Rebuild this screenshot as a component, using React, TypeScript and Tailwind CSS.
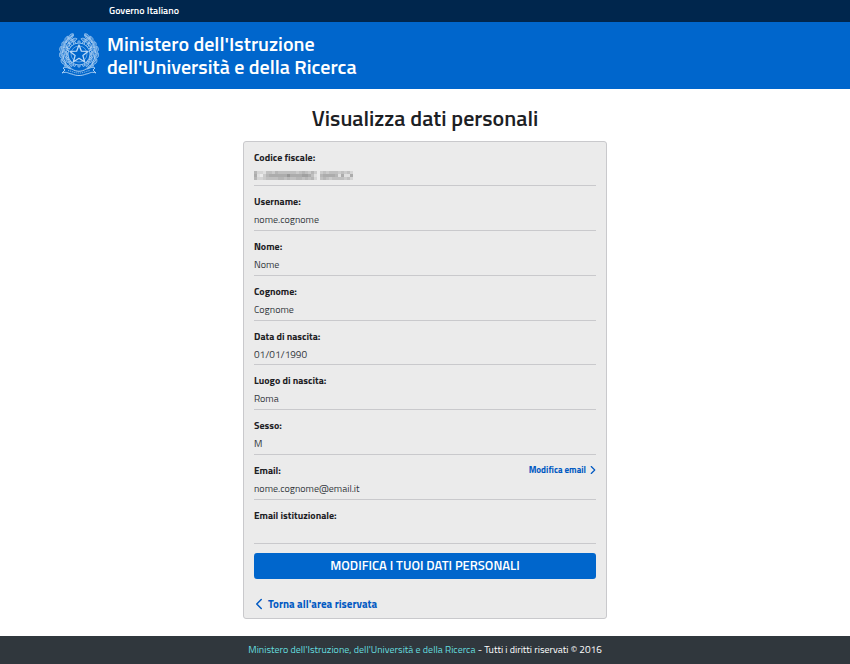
import { FiChevronLeft, FiChevronRight } from 'react-icons/fi'

interface Field {
    label: string
    value: string
    masked?: boolean
    action?: string
}

const fields: Field[] = [
    { label: 'Codice fiscale:', value: '', masked: true },
    { label: 'Username:', value: 'nome.cognome' },
    { label: 'Nome:', value: 'Nome' },
    { label: 'Cognome:', value: 'Cognome' },
    { label: 'Data di nascita:', value: '01/01/1990' },
    { label: 'Luogo di nascita:', value: 'Roma' },
    { label: 'Sesso:', value: 'M' },
    { label: 'Email:', value: 'nome.cognome@email.it', action: 'Modifica email' },
    { label: 'Email istituzionale:', value: '' },
]

// grey level of each 3px tile, 0 = background, 9 = darkest
const mosaic = [
    '522144354444443454353034344434342',
    '610356666668666677641056666516116',
    '522344445545445545452045434444342',
]

function MaskedValue() {
    return (
        <svg className="h-[9px] w-[99px]" viewBox="0 0 99 9" role="img" aria-label="Nascosto">
            {mosaic.map((row, y) =>
                row.split('').map((level, x) => (
                    <rect
                        key={`${x}-${y}`}
                        x={x * 3}
                        y={y * 3}
                        width="3"
                        height="3"
                        fill="#666"
                        fillOpacity={Number(level) * 0.08}
                    />
                )),
            )}
        </svg>
    )
}

const branch = [
    [12, 4, 35],
    [8, 7, 15],
    [5, 12, -5],
    [3, 17, -15],
    [3, 23, -30],
    [5, 29, -45],
    [9, 34, -60],
]

function Emblem() {
    const teeth = Array.from({ length: 16 }, (_, i) => i * 22.5)
    return (
        <svg className="h-11 w-10 shrink-0" viewBox="0 0 40 44" fill="none" stroke="#b9d8f6" aria-hidden="true">
            <circle cx="20" cy="21" r="11" strokeWidth="0.8" />
            <circle cx="20" cy="21" r="8" strokeWidth="0.5" />
            {teeth.map((angle) => (
                <path key={angle} d="M19 10 v-2 h2 v2" strokeWidth="0.7" transform={`rotate(${angle} 20 21)`} />
            ))}
            <path
                d="M20 12 L22.4 18.2 L29 18.4 L23.9 22.6 L25.7 29 L20 25.3 L14.3 29 L16.1 22.6 L11 18.4 L17.6 18.2 Z"
                fill="#0066cc"
                strokeWidth="1.3"
                strokeLinejoin="round"
            />
            {['', 'translate(40 0) scale(-1 1)'].map((side) => (
                <g key={side} transform={side} strokeWidth="0.6">
                    <path d="M15 2 C5 6 2 17 5 26 C7 33 11 37 18 40" />
                    {branch.map(([x, y, angle]) => (
                        <g
                            key={y}
                            transform={`translate(${x} ${y}) rotate(${angle})`}
                            fill="#b9d8f6"
                            fillOpacity="0.3"
                        >
                            <path d="M0 3 C-3 1 -3 -2 0 -4 C2 -2 2 1 0 3 Z M0 3 V-3" />
                            <path d="M2 3 C2 0 4 -2 6 -2 C6 1 5 3 2 3 Z" />
                        </g>
                    ))}
                </g>
            ))}
            <path
                d="M4 35 C8 33 9 36 13 36 C17 39 23 39 27 36 C31 36 32 33 36 35 L34 37 L37 40 C32 38 30 41 27 41 C23 43 17 43 13 41 C10 41 8 38 3 40 L6 37 Z"
                fill="#0066cc"
                strokeWidth="0.9"
            />
            <path d="M9 37.5 L13 38.5 C17 40.5 23 40.5 27 38.5 L31 37.5" strokeWidth="0.7" strokeDasharray="1.2 0.8" />
        </svg>
    )
}

function FieldRow({ label, value, masked, action }: Field) {
    return (
        <div className="h-[45px] border-b border-[#c9c9cc] pt-1.5 nth-[4n+1]:h-11">
            <div className="flex h-[18px] items-center justify-between">
                <dt className="text-[10px] font-bold text-[#1c2024]">{label}</dt>
                {action && (
                    <a href="#email" className="flex items-center text-[9px] font-bold text-[#0059c2]">
                        {action}
                        <FiChevronRight className="-mr-1 h-3.5 w-3.5" />
                    </a>
                )}
            </div>
            <dd className="flex h-[18px] items-center text-[10px] text-[#33383d]">
                {masked ? <MaskedValue /> : value}
            </dd>
        </div>
    )
}

export default function App() {
    return (
        <div className="flex min-h-screen flex-col bg-white font-['Titillium_Web',Roboto,sans-serif]">
            <header className="text-white">
                <div className="bg-[#00264d] px-[109px] text-[10px] leading-[22px] font-semibold">
                    Governo Italiano
                </div>
                <div className="flex items-center gap-2 bg-[#0066cc] px-[59px] pt-[10px] pb-[11px]">
                    <Emblem />
                    <p className="text-xl leading-[23px] font-semibold">
                        Ministero dell'Istruzione
                        <br />
                        dell'Università e della Ricerca
                    </p>
                </div>
            </header>

            <main className="mx-auto w-full max-w-[364px] flex-1 pt-[14px] pb-4">
                <h1 className="mb-2 text-center text-[22px] leading-[30px] font-semibold text-[#1c2024]">
                    Visualizza dati personali
                </h1>
                <section className="rounded-[3px] border border-[#c9c9cc] bg-[#ebebeb] px-[10px] pb-[5px]">
                    <dl>
                        {fields.map((field) => (
                            <FieldRow key={field.label} {...field} />
                        ))}
                    </dl>
                    <button
                        type="button"
                        className="mt-[9px] h-[26px] w-full rounded-[3px] bg-[#0066cc] text-[13px] font-semibold text-white"
                    >
                        MODIFICA I TUOI DATI PERSONALI
                    </button>
                    <a
                        href="#area-riservata"
                        className="mt-4 flex w-fit items-center text-[11px] leading-[18px] font-bold text-[#0059c2]"
                    >
                        <FiChevronLeft className="-ml-1 h-[18px] w-[18px]" />
                        Torna all'area riservata
                    </a>
                </section>
            </main>

            <footer className="bg-[#30373d] py-[5px] text-center text-[10px] leading-[18px] text-white">
                <a href="#miur" className="text-[#65dcdf]">
                    Ministero dell'Istruzione, dell'Università e della Ricerca
                </a>{' '}
                - Tutti i diritti riservati © 2016
            </footer>
        </div>
    )
}
